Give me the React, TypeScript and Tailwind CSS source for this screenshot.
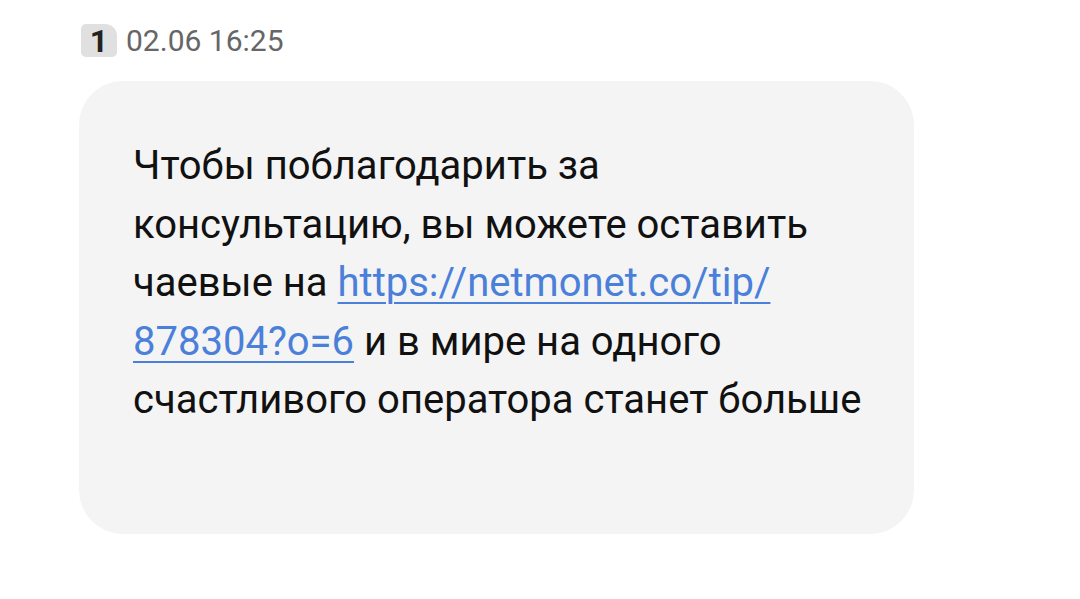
export default function App() {
  return (
    <div className="w-[1080px] h-[599px] bg-white overflow-hidden" style={{ fontFamily: "Roboto, 'Noto Sans', sans-serif" }}>
      <div className="pl-[81px] pt-[24px] flex items-center gap-[9px]">
        <div className="w-[36px] h-[33px] rounded-[5px] rounded-tr-[12px] bg-[#e0e0e0] flex items-center justify-center text-[32px] font-bold text-[#222] leading-none">1</div>
        <div className="text-[30px] text-[#666] leading-none">02.06 16:25</div>
      </div>
      <div className="ml-[79px] mt-[24px] w-[835px] h-[453px] bg-[#f4f4f4] rounded-[44px] pl-[54px] pt-[56px] pr-[10px]">
        <p className="text-[40px] leading-[58.5px] text-[#111] whitespace-nowrap">
          Чтобы поблагодарить за<br />
          консультацию, вы можете оставить<br />
          чаевые на{" "}
          <a className="text-[#4a80da] underline decoration-[2px] underline-offset-[6px]">
            https://netmonet.co/tip/<br />878304?o=6
          </a>{" "}
          и в мире на одного<br />
          счастливого оператора станет больше
        </p>
      </div>
    </div>
  );
}
